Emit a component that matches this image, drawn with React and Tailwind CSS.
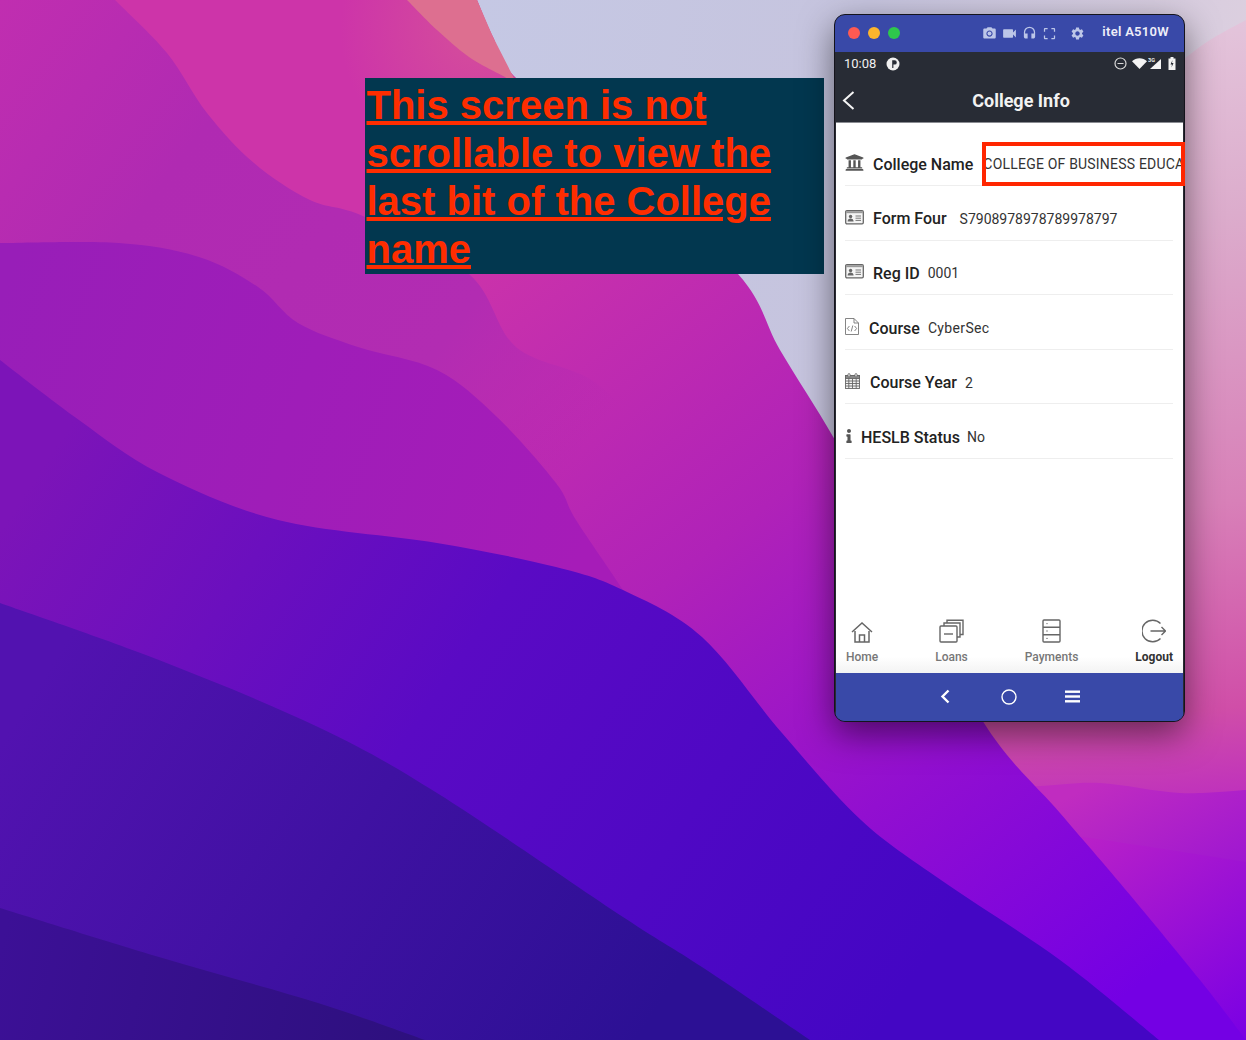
import React from "react";
import { FaUniversity, FaInfo } from "react-icons/fa";
import { MdCameraAlt, MdVideocam, MdHeadset, MdCropFree, MdSettings } from "react-icons/md";

function smooth(points) {
  let d = `M${points[0][0]} ${points[0][1]}`;
  for (let i = 0; i < points.length - 1; i++) {
    const p0 = points[i - 1] || points[i];
    const p1 = points[i];
    const p2 = points[i + 1];
    const p3 = points[i + 2] || p2;
    const c1x = p1[0] + (p2[0] - p0[0]) / 6;
    const c1y = p1[1] + (p2[1] - p0[1]) / 6;
    const c2x = p2[0] - (p3[0] - p1[0]) / 6;
    const c2y = p2[1] - (p3[1] - p1[1]) / 6;
    d += ` C${c1x} ${c1y} ${c2x} ${c2y} ${p2[0]} ${p2[1]}`;
  }
  return d;
}

const edgeMain = [[477, 0], [493, 37], [515, 77], [620, 170], [738, 274], [780, 350], [835, 440], [900, 560], [984, 723], [1060, 813], [1120, 883], [1200, 980], [1246, 1040]];
const pathMain = smooth(edgeMain) + " L0 1040 L0 0 Z";
const pathLeft = smooth([[115, 0], [167, 53], [207, 113], [254, 163], [310, 200], [365, 217], [469, 274], [516, 347], [596, 383], [650, 450], [690, 560]]) + " L690 620 L0 620 L0 0 Z";
const pathD = smooth([[0, 243], [119, 243], [199, 257], [258, 287], [298, 323], [358, 347], [437, 370], [497, 417], [556, 483], [576, 520], [623, 590], [640, 620]]) + " L0 620 Z";
const pathA = smooth([[0, 360], [79, 420], [159, 473], [278, 520], [437, 543], [556, 567], [623, 590], [702, 637], [782, 733], [861, 820], [941, 880], [1060, 960], [1159, 1040]]) + " L0 1040 Z";
const pathB = smooth([[0, 603], [159, 660], [318, 727], [437, 793], [623, 917], [702, 967], [810, 1040]]) + " L0 1040 Z";
const pathC = smooth([[0, 908], [159, 957], [318, 1003], [425, 1040]]) + " L0 1040 Z";
const pathF = smooth([[407, 0], [437, 30], [469, 57], [505, 77]]) + " L520 90 L493 37 L477 0 Z";
const pathR = smooth([[1246, 20], [1210, 40], [1180, 62]]) + " L900 300 L900 800 L1100 1040 L1246 1040 Z";
const pathG = smooth([[1000, 786], [1040, 786], [1100, 783], [1180, 793], [1246, 790]]) + " L1246 1040 L1100 1040 Z";
const pathH = smooth([[1040, 832], [1090, 838], [1170, 850], [1246, 862]]) + " L1246 1040 L1100 1040 Z";

function Wallpaper() {
  return (
    <svg className="absolute inset-0" width="1246" height="1040" viewBox="0 0 1246 1040">
      <defs>
        <linearGradient id="lav" x1="480" y1="0" x2="1246" y2="100" gradientUnits="userSpaceOnUse">
          <stop offset="0" stopColor="#c5c8e4" />
          <stop offset="0.5" stopColor="#c6c4de" />
          <stop offset="1" stopColor="#dccfdf" />
        </linearGradient>
        <linearGradient id="main" x1="500" y1="200" x2="1120" y2="1000" gradientUnits="userSpaceOnUse">
          <stop offset="0" stopColor="#cd34a9" />
          <stop offset="0.4" stopColor="#b022b8" />
          <stop offset="0.7" stopColor="#920fd0" />
          <stop offset="1" stopColor="#7400e4" />
        </linearGradient>
        <radialGradient id="tint" cx="480" cy="30" r="140" gradientUnits="userSpaceOnUse">
          <stop offset="0" stopColor="#d85a94" stopOpacity="0.7" />
          <stop offset="1" stopColor="#d85a94" stopOpacity="0" />
        </radialGradient>
        <linearGradient id="left" x1="0" y1="0" x2="640" y2="480" gradientUnits="userSpaceOnUse">
          <stop offset="0" stopColor="#c02eb0" />
          <stop offset="0.3" stopColor="#b02ab2" />
          <stop offset="0.7" stopColor="#b22cb2" />
          <stop offset="0.92" stopColor="#b028b4" stopOpacity="0" />
        </linearGradient>
        <linearGradient id="dl" x1="0" y1="300" x2="600" y2="500" gradientUnits="userSpaceOnUse">
          <stop offset="0" stopColor="#981eb8" />
          <stop offset="1" stopColor="#a61cb8" />
        </linearGradient>
        <linearGradient id="al" x1="60" y1="440" x2="900" y2="1000" gradientUnits="userSpaceOnUse">
          <stop offset="0" stopColor="#7c14b8" />
          <stop offset="0.45" stopColor="#5a0ac4" />
          <stop offset="1" stopColor="#4406c4" />
        </linearGradient>
        <linearGradient id="bl" x1="60" y1="650" x2="650" y2="1020" gradientUnits="userSpaceOnUse">
          <stop offset="0" stopColor="#5212b0" />
          <stop offset="1" stopColor="#2c1094" />
        </linearGradient>
        <linearGradient id="cl" x1="0" y1="950" x2="420" y2="1040" gradientUnits="userSpaceOnUse">
          <stop offset="0" stopColor="#3c1096" />
          <stop offset="1" stopColor="#2d107e" />
        </linearGradient>
        <linearGradient id="rl" x1="1100" y1="20" x2="1200" y2="1040" gradientUnits="userSpaceOnUse">
          <stop offset="0" stopColor="#e4c6dc" />
          <stop offset="0.2" stopColor="#dcaccc" />
          <stop offset="0.48" stopColor="#d880b8" />
          <stop offset="0.68" stopColor="#d04ea8" />
          <stop offset="0.78" stopColor="#bc2cc0" />
          <stop offset="1" stopColor="#7a00e4" />
        </linearGradient>
        <linearGradient id="gl" x1="1100" y1="780" x2="1240" y2="1040" gradientUnits="userSpaceOnUse">
          <stop offset="0" stopColor="#c02cc0" />
          <stop offset="1" stopColor="#7a00e4" />
        </linearGradient>
        <linearGradient id="hl" x1="1100" y1="830" x2="1240" y2="1040" gradientUnits="userSpaceOnUse">
          <stop offset="0" stopColor="#b820c8" />
          <stop offset="1" stopColor="#7a00e4" />
        </linearGradient>
      </defs>
      <rect width="1246" height="1040" fill="url(#lav)" />
      <path d={pathR} fill="url(#rl)" />
      <path d={pathG} fill="url(#gl)" />
      <path d={pathH} fill="url(#hl)" />
      <path d={pathMain} fill="url(#main)" />
      <path d={pathMain} fill="url(#tint)" />
      <path d={pathF} fill="#dd6f90" />
      <path d={pathLeft} fill="url(#left)" />
      <path d={pathD} fill="url(#dl)" />
      <path d={pathA} fill="url(#al)" />
      <path d={pathB} fill="url(#bl)" />
      <path d={pathC} fill="url(#cl)" />
    </svg>
  );
}

function CardIcon() {
  return (
    <svg width="19" height="15" viewBox="0 0 19 15">
      <rect x="0.7" y="0.7" width="17.6" height="13.1" rx="1.2" fill="#f4f4f4" stroke="#666" strokeWidth="1.3" />
      <rect x="1.2" y="1.2" width="16.6" height="2" fill="#999" />
      <circle cx="5.6" cy="6.5" r="1.7" fill="#666" />
      <path d="M2.6 11.5c0-2 1.2-3 3-3s3 1 3 3z" fill="#666" />
      <path d="M10.5 6h5.5M10.5 8.2h5.5M10.5 10.4h5.5" stroke="#777" strokeWidth="1" />
    </svg>
  );
}

function FileCodeIcon() {
  return (
    <svg width="14" height="17" viewBox="0 0 14 17" fill="none" stroke="#777" strokeWidth="0.9">
      <path d="M0.5 0.5h8.5l4.5 4.5v11.5h-13z" />
      <path d="M9 0.5v4.5h4.5" />
      <path d="M4.4 8l-2 2.5 2 2.5M9.6 8l2 2.5-2 2.5M7.8 7.5l-1.6 6" />
    </svg>
  );
}

function CalendarIcon() {
  return (
    <svg width="15" height="16" viewBox="0 0 15 16" fill="none" stroke="#666" strokeWidth="0.9">
      <rect x="0.5" y="2.5" width="14" height="13" fill="#f2f2f2" />
      <rect x="0.5" y="2.5" width="14" height="3" fill="#888" />
      <path d="M0.5 8h14M0.5 10.5h14M0.5 13h14M3.8 5.5v10M7.5 5.5v10M11.2 5.5v10" />
      <rect x="3" y="0.6" width="2" height="3.4" rx="1" fill="#fff" />
      <rect x="10" y="0.6" width="2" height="3.4" rx="1" fill="#fff" />
    </svg>
  );
}

const rows = [
  { label: "College Name", value: "COLLEGE OF BUSINESS EDUCATION", icon: <FaUniversity className="text-[19px] text-[#555]" />, slot: "w-[28px]", gap: "ml-[10px] tracking-[0.2px]" },
  { label: "Form Four", value: "S7908978978789978797", icon: <CardIcon />, slot: "w-[28px]", gap: "ml-[13px]" },
  { label: "Reg ID", value: "0001", icon: <CardIcon />, slot: "w-[28px]", gap: "ml-[8px]" },
  { label: "Course", value: "CyberSec", icon: <FileCodeIcon />, slot: "w-[24px]", gap: "ml-[8px] tracking-[0.35px]" },
  { label: "Course Year", value: "2", icon: <CalendarIcon />, slot: "w-[25px]", gap: "ml-[8px]" },
  { label: "HESLB Status", value: "No", icon: <FaInfo className="text-[14px] text-[#555] -ml-[3px]" />, slot: "w-[16px]", gap: "ml-[7px]" },
];

function Row({ row }) {
  return (
    <div className="flex h-[54.6px] items-center whitespace-nowrap border-b border-[#eeeeee] pt-[13px]">
      <div className={`${row.slot} -mt-[4px] flex shrink-0 items-center`}>{row.icon}</div>
      <span className="text-[16px] font-medium text-[#222222]">{row.label}</span>
      <span className={`${row.gap} text-[14px] text-[#333333]`}>{row.value}</span>
    </div>
  );
}

function HomeIcon() {
  return (
    <svg width="22" height="21" viewBox="0 0 22 21" fill="none" stroke="#666" strokeWidth="1.5">
      <path d="M1 10L11 1l10 9" />
      <path d="M4 9v11h14V9" />
      <path d="M8.5 20v-7h5v7" />
    </svg>
  );
}

function LoansIcon() {
  return (
    <svg width="25" height="24" viewBox="0 0 25 24" fill="none" stroke="#666" strokeWidth="1.4">
      <rect x="1" y="7" width="17" height="16" rx="1" />
      <path d="M5 7V4h16v14h-3M8 4V1.2h16v14.3h-3" />
      <path d="M5 15h9" />
    </svg>
  );
}

function PaymentsIcon() {
  return (
    <svg width="19" height="24" viewBox="0 0 19 24" fill="none" stroke="#666" strokeWidth="1.4">
      <rect x="1" y="1" width="17" height="22" rx="1" />
      <path d="M1 8.3h17M1 15.7h17" />
      <circle cx="5" cy="4.6" r="0.7" fill="#666" stroke="none" />
      <circle cx="5" cy="12" r="0.7" fill="#666" stroke="none" />
      <circle cx="5" cy="19.4" r="0.7" fill="#666" stroke="none" />
    </svg>
  );
}

function LogoutIcon() {
  return (
    <svg width="24" height="24" viewBox="0 0 24 24" fill="none" stroke="#666" strokeWidth="1.4">
      <path d="M18.5 4.5A10.8 10.8 0 1 0 18.5 19.5" />
      <path d="M8.5 12h15M19.5 8l4 4-4 4" />
    </svg>
  );
}

const navItems = [
  { label: "Home", icon: <HomeIcon />, cls: "font-medium text-[#777777]" },
  { label: "Loans", icon: <LoansIcon />, cls: "font-medium text-[#777777]" },
  { label: "Payments", icon: <PaymentsIcon />, cls: "font-medium text-[#777777]" },
  { label: "Logout", icon: <LogoutIcon />, cls: "font-bold text-[#333333]" },
];

function StatusBar() {
  return (
    <div className="flex h-[24px] items-center pl-[8px] pr-[7px] text-white">
      <span className="text-[13px] font-normal text-[#f0f0f0]">10:08</span>
      <svg className="ml-[10px]" width="14" height="14" viewBox="0 0 14 14">
        <circle cx="7" cy="7" r="6.5" fill="#f0f0f0" />
        <path d="M6.2 3.2h2.4a2.2 2.2 0 0 1 0 4.4H7.4v3.4h-1.2z" fill="#282c35" />
      </svg>
      <svg className="ml-auto" width="13" height="13" viewBox="0 0 13 13" fill="none" stroke="#d8d8d8" strokeWidth="1.2">
        <circle cx="6.5" cy="6.5" r="5.5" />
        <path d="M3.5 6.5h6" />
      </svg>
      <svg className="ml-[5px]" width="15" height="11" viewBox="0 0 15 11">
        <path d="M0 3.2C4 -0.8 11 -0.8 15 3.2L7.5 11z" fill="#f4f4f4" />
      </svg>
      <svg className="ml-[1px]" width="14" height="13" viewBox="0 0 14 13">
        <path d="M13 2V12H2z" fill="#f4f4f4" />
        <text x="0" y="5" fontSize="5.5" fontFamily="Roboto" fontWeight="700" fill="#eeeeee">3G</text>
      </svg>
      <svg className="ml-[6px]" width="8" height="13" viewBox="0 0 8 13">
        <path d="M2.5 0h3v1.5H7.5v11.5H0.5V1.5h2z" fill="#f4f4f4" />
        <path d="M4.5 3L2.5 7.5h1.5L3.5 10.5 5.5 6H4z" fill="#282c35" />
      </svg>
    </div>
  );
}

function Phone() {
  return (
    <div className="absolute left-[834px] top-[13.5px] h-[708px] w-[351px]">
      <div className="flex h-full w-full flex-col overflow-hidden rounded-[11px] border border-[#14141c] bg-[#3949a8] shadow-[0_12px_34px_rgba(0,0,0,0.5)]" style={{ fontFamily: "Roboto, sans-serif" }}>
        <div className="flex h-[37px] shrink-0 items-center pl-[13px] pr-[15px]">
          <span className="h-[12px] w-[12px] rounded-full bg-[#fe5a52]" />
          <span className="ml-[8px] h-[12px] w-[12px] rounded-full bg-[#fdb52c]" />
          <span className="ml-[8px] h-[12px] w-[12px] rounded-full bg-[#2ec84c]" />
          <div className="ml-auto flex items-center text-[#bcc6e8]">
            <span className="flex w-[20px] justify-center"><MdCameraAlt size={15} /></span>
            <span className="flex w-[20px] justify-center"><MdVideocam size={17} /></span>
            <span className="flex w-[20px] justify-center"><MdHeadset size={15} /></span>
            <span className="flex w-[20px] justify-center"><MdCropFree size={15} /></span>
            <span className="ml-[8px] flex w-[20px] justify-center"><MdSettings size={15} /></span>
          </div>
          <span className="ml-[15px] -mt-[3px] text-[13px] font-semibold tracking-[0.3px] text-[#eeeef8]">itel A510W</span>
        </div>
        <div className="flex min-h-0 flex-1 flex-col border-x border-[#2a2a33]">
          <div className="shrink-0 bg-[#282c35]">
            <StatusBar />
            <div className="relative flex h-[46px] items-center justify-center pl-[23px] pt-[4px]">
              <svg className="absolute left-[6px] top-[15px]" width="13" height="19" viewBox="0 0 13 19" fill="none" stroke="#f4f4f4" strokeWidth="2">
                <path d="M11.5 1L2 9.5l9.5 8.5" />
              </svg>
              <span className="text-[18px] font-bold text-[#f2f2f2]">College Info</span>
            </div>
          </div>
          <div className="h-[1px] shrink-0 bg-[#8a8c92]" />
          <div className="flex min-h-0 flex-1 flex-col overflow-hidden bg-white">
            <div className="h-[9px] shrink-0" />
            <div className="pl-[9px] pr-[10px]">
              {rows.map((r) => <Row key={r.label} row={r} />)}
            </div>
            <div className="mt-auto flex items-start justify-between bg-gradient-to-b from-white from-70% to-[#f3f3f3] pl-[10px] pr-[10px] pb-[9px]">
              {navItems.map((n) => (
                <div key={n.label} className="flex flex-col items-center">
                  <div className="flex h-[24px] items-end">{n.icon}</div>
                  <span className={`mt-[7px] text-[12px] leading-[14px] ${n.cls}`}>{n.label}</span>
                </div>
              ))}
            </div>
          </div>
          <div className="flex h-[48px] shrink-0 items-center justify-center bg-[#3949a8] pl-[1px]">
            <svg width="10" height="15" viewBox="0 0 10 15" fill="none" stroke="#fff" strokeWidth="2.4">
              <path d="M8.5 1.5L2.5 7.5l6 6" />
            </svg>
            <svg className="ml-[51px]" width="16" height="16" viewBox="0 0 16 16" fill="none" stroke="#fff" strokeWidth="1.4">
              <circle cx="8" cy="8" r="7" />
            </svg>
            <svg className="ml-[48px]" width="15" height="13" viewBox="0 0 15 13" fill="#fff">
              <rect y="0.5" width="15" height="2.4" />
              <rect y="5.3" width="15" height="2.4" />
              <rect y="10.1" width="15" height="2.4" />
            </svg>
          </div>
        </div>
      </div>
      <div className="absolute left-[148px] top-[128.5px] h-[44px] w-[203px] border-4 border-[#ff2600]" />
    </div>
  );
}

export default function App() {
  return (
    <div className="relative h-[1040px] w-[1246px] overflow-hidden">
      <Wallpaper />
      <div className="absolute left-[365px] top-[78px] h-[196px] w-[459px] bg-[#02374f] pl-[1.5px] pr-[2px] pt-[3px] text-[40px] font-bold leading-[48px] text-[#ff2d00] underline" style={{ fontFamily: "'Liberation Sans', Arial, sans-serif" }}>
        This screen is not scrollable to view the last bit of the College name
      </div>
      <Phone />
    </div>
  );
}
